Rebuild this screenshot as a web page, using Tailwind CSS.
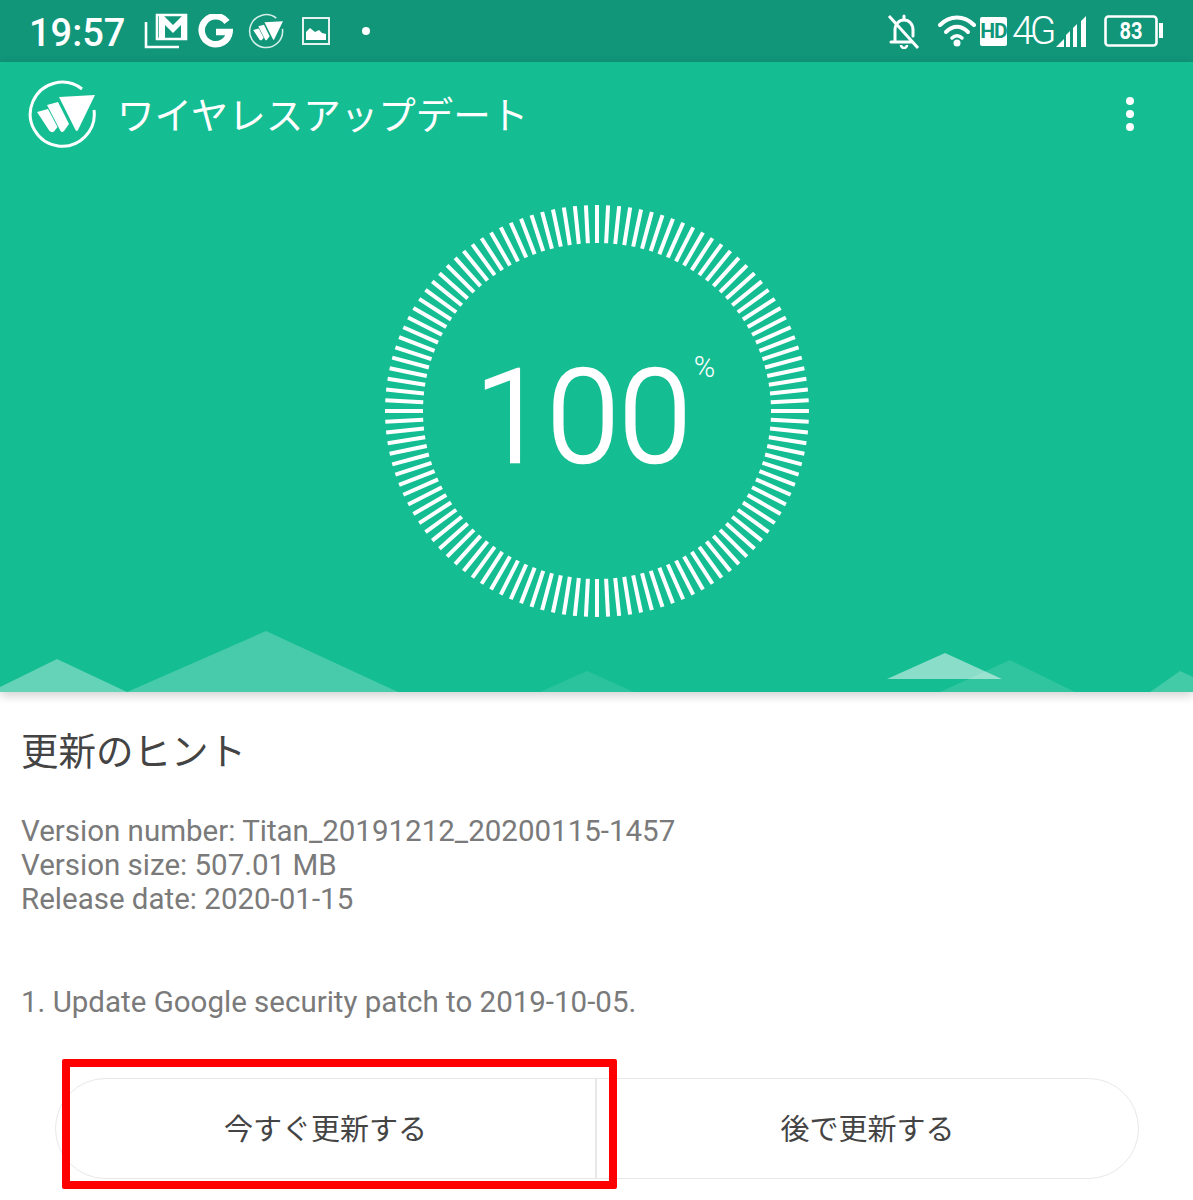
<!DOCTYPE html>
<html lang="ja">

<head>
    <meta charset="UTF-8">
    <meta name="viewport" content="width=device-width, initial-scale=1.0">
    <title>ワイヤレスアップデート</title>
    <script src="https://cdn.jsdelivr.net/npm/@tailwindcss/browser@4"></script>
</head>

<body class="bg-white font-['Roboto','Noto_Sans_CJK_JP',sans-serif]">

    <div class="relative w-[1193px] h-[1200px] overflow-hidden">

        <!-- status bar -->
        <div class="h-[62px] bg-[#11967a] flex items-center justify-between pl-[29px] pr-[29px] text-white">
            <div class="flex items-center">
                <span class="text-[38px] font-medium leading-none w-[115px] pt-[3px]">19:57</span>
                <svg class="w-[44px] h-[36px]" viewBox="0 0 44 36" fill="none" stroke="white">
                    <path d="M2 9v25h33" stroke-width="2.6" />
                    <path d="M13 2h29v24H13z" stroke-width="2.6" />
                    <path d="M15 3v22h6V12l8 8 8-8v13h6V3h-5l-9 9-9-9z" fill="white" stroke="none" />
                </svg>
                <svg class="w-[35px] h-[34px] ml-[10px]" viewBox="0 0 35 34" fill="none" stroke="white" stroke-width="6.5">
                    <path d="M29 8A14 14 0 1 0 31.6 18H18" />
                </svg>
                <svg class="w-[36px] h-[36px] ml-[15px]" viewBox="27 79 70 70" fill="none">
                    <path d="M82 89A32 32 0 1 0 94 110" stroke="#d5efe8" stroke-width="3" />
                    <path d="M59 97L95 95L78 130Q77 132 75.5 130Z" fill="white" />
                    <path d="M47 105L58 102L69 124L64 131Q62 133 60.5 131Z" fill="white" />
                    <path d="M37 112L48 109L57.5 127L54 131.5Q52 133 49.5 131Z" fill="white" />
                </svg>
                <svg class="w-[30px] h-[30px] ml-[17px]" viewBox="0 0 30 30" fill="none">
                    <path d="M2 2h26v26H2z" stroke="#e4f3ef" stroke-width="2" />
                    <path d="M5 24v-8l4-4 5 4 4-2 3 3 4 1v6z" fill="white" />
                </svg>
                <span class="w-[8px] h-[8px] rounded-full bg-white ml-[31px]"></span>
            </div>
            <div class="flex items-center">
                <svg class="w-[34px] h-[36px]" viewBox="0 0 34 36" fill="none" stroke="white" stroke-width="3">
                    <path d="M8 28V17c0-6 4-10 9-10s9 4 9 10v6M4 29h20" stroke-linecap="round" />
                    <path d="M14 32a3 3 0 0 0 6 0" stroke-width="2.5" />
                    <path d="M17 3v3" stroke-linecap="round" />
                    <path d="M2 3l29 32" stroke-width="3" />
                </svg>
                <svg class="w-[38px] h-[34px] ml-[17px]" viewBox="0 0 38 34" fill="none" stroke="white" stroke-linecap="round">
                    <path d="M2 11c10-10 24-10 34 0" stroke-width="4" />
                    <path d="M8 18c7-7 15-7 22 0" stroke-width="4" />
                    <path d="M14 24c3-3 7-3 10 0" stroke-width="3.5" />
                    <circle cx="19" cy="29" r="3.5" fill="white" stroke="none" />
                </svg>
                <span class="w-[27px] h-[29px] ml-[4px] bg-white rounded-[2px] text-[#11967a] text-[21px] font-bold leading-[29px] text-center tracking-[-1px]">HD</span>
                <span class="w-[40px] ml-[5px] text-[39px] font-light leading-none tracking-[-4px]">4G</span>
                <svg class="w-[31px] h-[32px] ml-[4px]" viewBox="0 0 31 32" fill="white">
                    <path d="M0 32l8-8v8zM10 32V20l4-4v16zM17 32V13l4-4v23zM25 32V6l5-5v31z" />
                </svg>
                <svg class="w-[60px] h-[32px] ml-[17px]" viewBox="0 0 60 32" fill="none">
                    <rect x="1.5" y="1.5" width="51" height="29" rx="3" stroke="white" stroke-width="2.6" />
                    <path d="M55 8h4v15h-4z" fill="white" />
                    <text x="27" y="24" text-anchor="middle" fill="white" font-size="24" font-weight="700" font-family="Roboto" textLength="23" lengthAdjust="spacingAndGlyphs">83</text>
                </svg>
            </div>
        </div>

        <!-- hero -->
        <div class="relative h-[630px] bg-[#14bd92] shadow-[0_3px_10px_rgba(0,0,0,0.2)]">
            <!-- mountains -->
            <svg class="absolute left-0 top-0 w-[1193px] h-[630px]" viewBox="0 62 1193 630">
                <path d="M0 692v-5l57-28 70 33z" fill="white" fill-opacity="0.34" />
                <path d="M127 692l139-61 132 61z" fill="white" fill-opacity="0.22" />
                <path d="M540 692l47-21 47 21z" fill="white" fill-opacity="0.1" />
                <path d="M940 692l70-32 65 32z" fill="white" fill-opacity="0.12" />
                <path d="M1150 692l30-21 13 6v15z" fill="white" fill-opacity="0.2" />
                <path d="M887 679l58-26 57 26z" fill="white" fill-opacity="0.5" />
            </svg>

            <!-- app bar -->
            <div class="relative h-[104px] flex items-center justify-between pl-[27px] pr-[59px]">
                <div class="flex items-center text-white">
                    <svg class="w-[70px] h-[70px]" viewBox="27 79 70 70" fill="none">
                        <path d="M82 89A32 32 0 1 0 94 110" stroke="white" stroke-width="3" />
                        <path d="M59 97L95 95L78 130Q77 132 75.5 130Z" fill="white" />
                        <path d="M47 105L58 102L69 124L64 131Q62 133 60.5 131Z" fill="white" />
                        <path d="M37 112L48 109L57.5 127L54 131.5Q52 133 49.5 131Z" fill="white" />
                    </svg>
                    <span class="ml-[20px] pb-[3px] text-[37.5px] font-normal leading-none font-['Noto_Sans_CJK_JP',sans-serif]">ワイヤレスアップデート</span>
                </div>
                <div class="flex flex-col gap-[5px]">
                    <span class="w-[8px] h-[8px] rounded-full bg-white"></span>
                    <span class="w-[8px] h-[8px] rounded-full bg-white"></span>
                    <span class="w-[8px] h-[8px] rounded-full bg-white"></span>
                </div>
            </div>

            <!-- progress ring -->
            <div class="relative mx-auto mt-[39px] w-[424px] h-[412px]">
                <svg id="ring" class="w-[424px] h-[412px]" viewBox="0 0 424 412"></svg>
                <div class="absolute inset-0 flex items-center justify-center pr-[27px] pt-[14px]">
                    <div class="relative text-white">
                        <span class="block text-[130px] font-light leading-none [-webkit-text-stroke:2.5px_white]">100</span>
                        <span class="absolute right-[-24px] top-[0px] text-[29px] font-light leading-none">%</span>
                    </div>
                </div>
            </div>
        </div>

        <!-- update notes -->
        <div class="px-[21px]">
            <h2 class="mt-[35px] text-[37.5px] font-normal leading-[44px] text-[#444] font-['Noto_Sans_CJK_JP',sans-serif]">更新のヒント</h2>
            <div class="mt-[43px] text-[29.5px] leading-[34px] text-[#7a7a7a]">
                <p>Version number: Titan_20191212_20200115-1457</p>
                <p>Version size: 507.01 MB</p>
                <p>Release date: 2020-01-15</p>
            </div>
            <p class="mt-[69px] text-[29.5px] leading-[34px] text-[#7a7a7a]">1. Update Google security patch to 2019-10-05.</p>
        </div>

        <!-- buttons -->
        <div class="mt-[59px] ml-[55px] w-[1084px] h-[101px] flex border border-[#e8e8e8] rounded-full text-[29px] font-normal text-[#444] font-['Noto_Sans_CJK_JP',sans-serif]">
            <button class="w-[541px] h-full pb-[2px] border-r-2 border-[#e8e8e8]">今すぐ更新する</button>
            <button class="flex-1 h-full pb-[2px]">後で更新する</button>
        </div>

        <!-- red highlight -->
        <div class="absolute left-[62px] top-[1059px] w-[555px] h-[130px] border-[8px] border-[#ff0000] rounded-[2px]"></div>
    </div>

    <script>
        // 120 ticks round the ring
        const ring = document.getElementById('ring');
        for (let i = 0; i < 120; i++) {
            const a = i * Math.PI / 60;
            const line = document.createElementNS('http://www.w3.org/2000/svg', 'line');
            line.setAttribute('x1', 212 + Math.sin(a) * 174);
            line.setAttribute('y1', 206 - Math.cos(a) * 168);
            line.setAttribute('x2', 212 + Math.sin(a) * 212);
            line.setAttribute('y2', 206 - Math.cos(a) * 206);
            line.setAttribute('stroke', 'white');
            line.setAttribute('stroke-width', '4');
            ring.appendChild(line);
        }
    </script>

</body>

</html>
